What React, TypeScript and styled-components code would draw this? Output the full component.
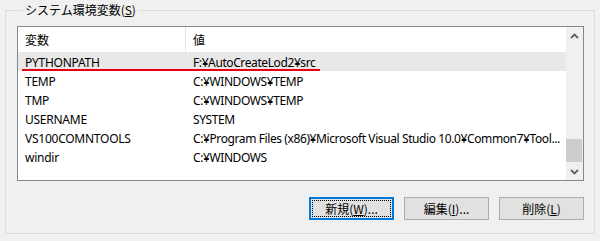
import React from 'react'
import styled, { createGlobalStyle } from 'styled-components'

const GlobalStyle = createGlobalStyle`
  html, body {
    margin: 0;
    padding: 0;
    background: #f0f0f0;
  }
  body {
    font-family: "Noto Sans", "Noto Sans CJK JP", sans-serif;
    font-size: 12px;
    color: #000;
  }
`

const Page = styled.div`
  width: 600px;
  height: 241px;
  overflow: hidden;
  box-sizing: border-box;
  padding: 0 5px;
`

const Group = styled.fieldset`
  margin: 0;
  min-width: 0;
  height: 234px;
  box-sizing: border-box;
  border: 1px solid #dcdcdc;
  padding: 6px 10px 0 11px;
`

const Legend = styled.legend`
  margin-left: 6px;
  padding: 0 2px;
  line-height: 20px;
  font-family: "Noto Sans CJK JP", sans-serif;
  font-size: 12px;
`

const Key = styled.span`
  text-decoration: underline;
  text-underline-offset: 1px;
`

const ListBox = styled.div`
  display: flex;
  height: 155px;
  box-sizing: border-box;
  border: 1px solid #828790;
  background: #fff;
`

const Table = styled.div`
  flex: 1;
  display: flex;
  flex-direction: column;
  min-width: 0;
`

const HeaderRow = styled.div`
  display: flex;
  height: 25px;
  align-items: center;
  font-family: "Noto Sans CJK JP", sans-serif;
`

const HeaderCell = styled.div<{ $width?: number }>`
  box-sizing: border-box;
  height: 100%;
  display: flex;
  align-items: center;
  padding-left: 7px;
  ${(p) => (p.$width ? `width: ${p.$width}px; border-right: 1px solid #e5e5e5;` : 'flex: 1;')}
`

const Row = styled.div<{ $selected?: boolean }>`
  position: relative;
  display: flex;
  height: 19px;
  align-items: center;
  padding-top: 1px;
  box-sizing: border-box;
  background: ${(p) => (p.$selected ? '#e8e8e8' : 'transparent')};
`

const NameCell = styled.div`
  width: 168px;
  box-sizing: border-box;
  padding-left: 7px;
  white-space: nowrap;
  overflow: hidden;
  letter-spacing: -0.25px;
`

const ValueCell = styled.div`
  flex: 1;
  min-width: 0;
  box-sizing: border-box;
  padding-left: 7px;
  white-space: nowrap;
  overflow: hidden;
  letter-spacing: -0.4px;
`

const Mark = styled.div`
  position: absolute;
  left: 4px;
  bottom: 0;
  width: 298px;
  height: 2px;
  background: #e60012;
`

const ScrollBar = styled.div`
  width: 17px;
  flex: none;
  display: flex;
  flex-direction: column;
  background: #f0f0f0;
`

const Arrow = styled.div`
  height: 17px;
  display: flex;
  align-items: center;
  justify-content: center;
`

const Track = styled.div`
  flex: 1;
  display: flex;
  flex-direction: column;
  justify-content: flex-end;
  padding-bottom: 1px;
`

const Thumb = styled.div`
  height: 23px;
  margin: 0 1px 0 0;
  background: #cdcdcd;
`

const Buttons = styled.div`
  display: flex;
  justify-content: flex-end;
  gap: 10px;
  margin-top: 16px;
`

const Button = styled.button<{ $focused?: boolean }>`
  width: 85px;
  height: 23px;
  box-sizing: border-box;
  position: relative;
  background: #e1e1e1;
  border: ${(p) => (p.$focused ? '2px solid #0078d7' : '1px solid #adadad')};
  font-family: "Noto Sans CJK JP", sans-serif;
  font-size: 12px;
  color: #000;
  padding: 0;
  ${(p) => (p.$focused ? 'outline: 1px dotted #000; outline-offset: -4px;' : '')}
`

const rows = [
  ['PYTHONPATH', 'F:¥AutoCreateLod2¥src'],
  ['TEMP', 'C:¥WINDOWS¥TEMP'],
  ['TMP', 'C:¥WINDOWS¥TEMP'],
  ['USERNAME', 'SYSTEM'],
  ['VS100COMNTOOLS', 'C:¥Program Files (x86)¥Microsoft Visual Studio 10.0¥Common7¥Tool...'],
  ['windir', 'C:¥WINDOWS'],
]

const Chevron = ({ down }: { down?: boolean }) => (
  <svg width="9" height="6" viewBox="0 0 9 6">
    <path
      d={down ? 'M1 1 L4.5 4.5 L8 1' : 'M1 5 L4.5 1.5 L8 5'}
      fill="none"
      stroke="#606060"
      strokeWidth="1.8"
    />
  </svg>
)

export default function App() {
  return (
    <>
      <GlobalStyle />
      <Page>
        <Group>
          <Legend>
            システム環境変数(<Key>S</Key>)
          </Legend>
          <ListBox>
            <Table>
              <HeaderRow>
                <HeaderCell $width={168}>変数</HeaderCell>
                <HeaderCell>値</HeaderCell>
              </HeaderRow>
              {rows.map(([name, value], i) => (
                <Row key={name} $selected={i === 0}>
                  <NameCell>{name}</NameCell>
                  <ValueCell>{value}</ValueCell>
                  {i === 0 && <Mark />}
                </Row>
              ))}
            </Table>
            <ScrollBar>
              <Arrow>
                <Chevron />
              </Arrow>
              <Track>
                <Thumb />
              </Track>
              <Arrow>
                <Chevron down />
              </Arrow>
            </ScrollBar>
          </ListBox>
          <Buttons>
            <Button $focused>
              新規(<Key>W</Key>)...
            </Button>
            <Button>
              編集(<Key>I</Key>)...
            </Button>
            <Button>
              削除(<Key>L</Key>)
            </Button>
          </Buttons>
        </Group>
      </Page>
    </>
  )
}
